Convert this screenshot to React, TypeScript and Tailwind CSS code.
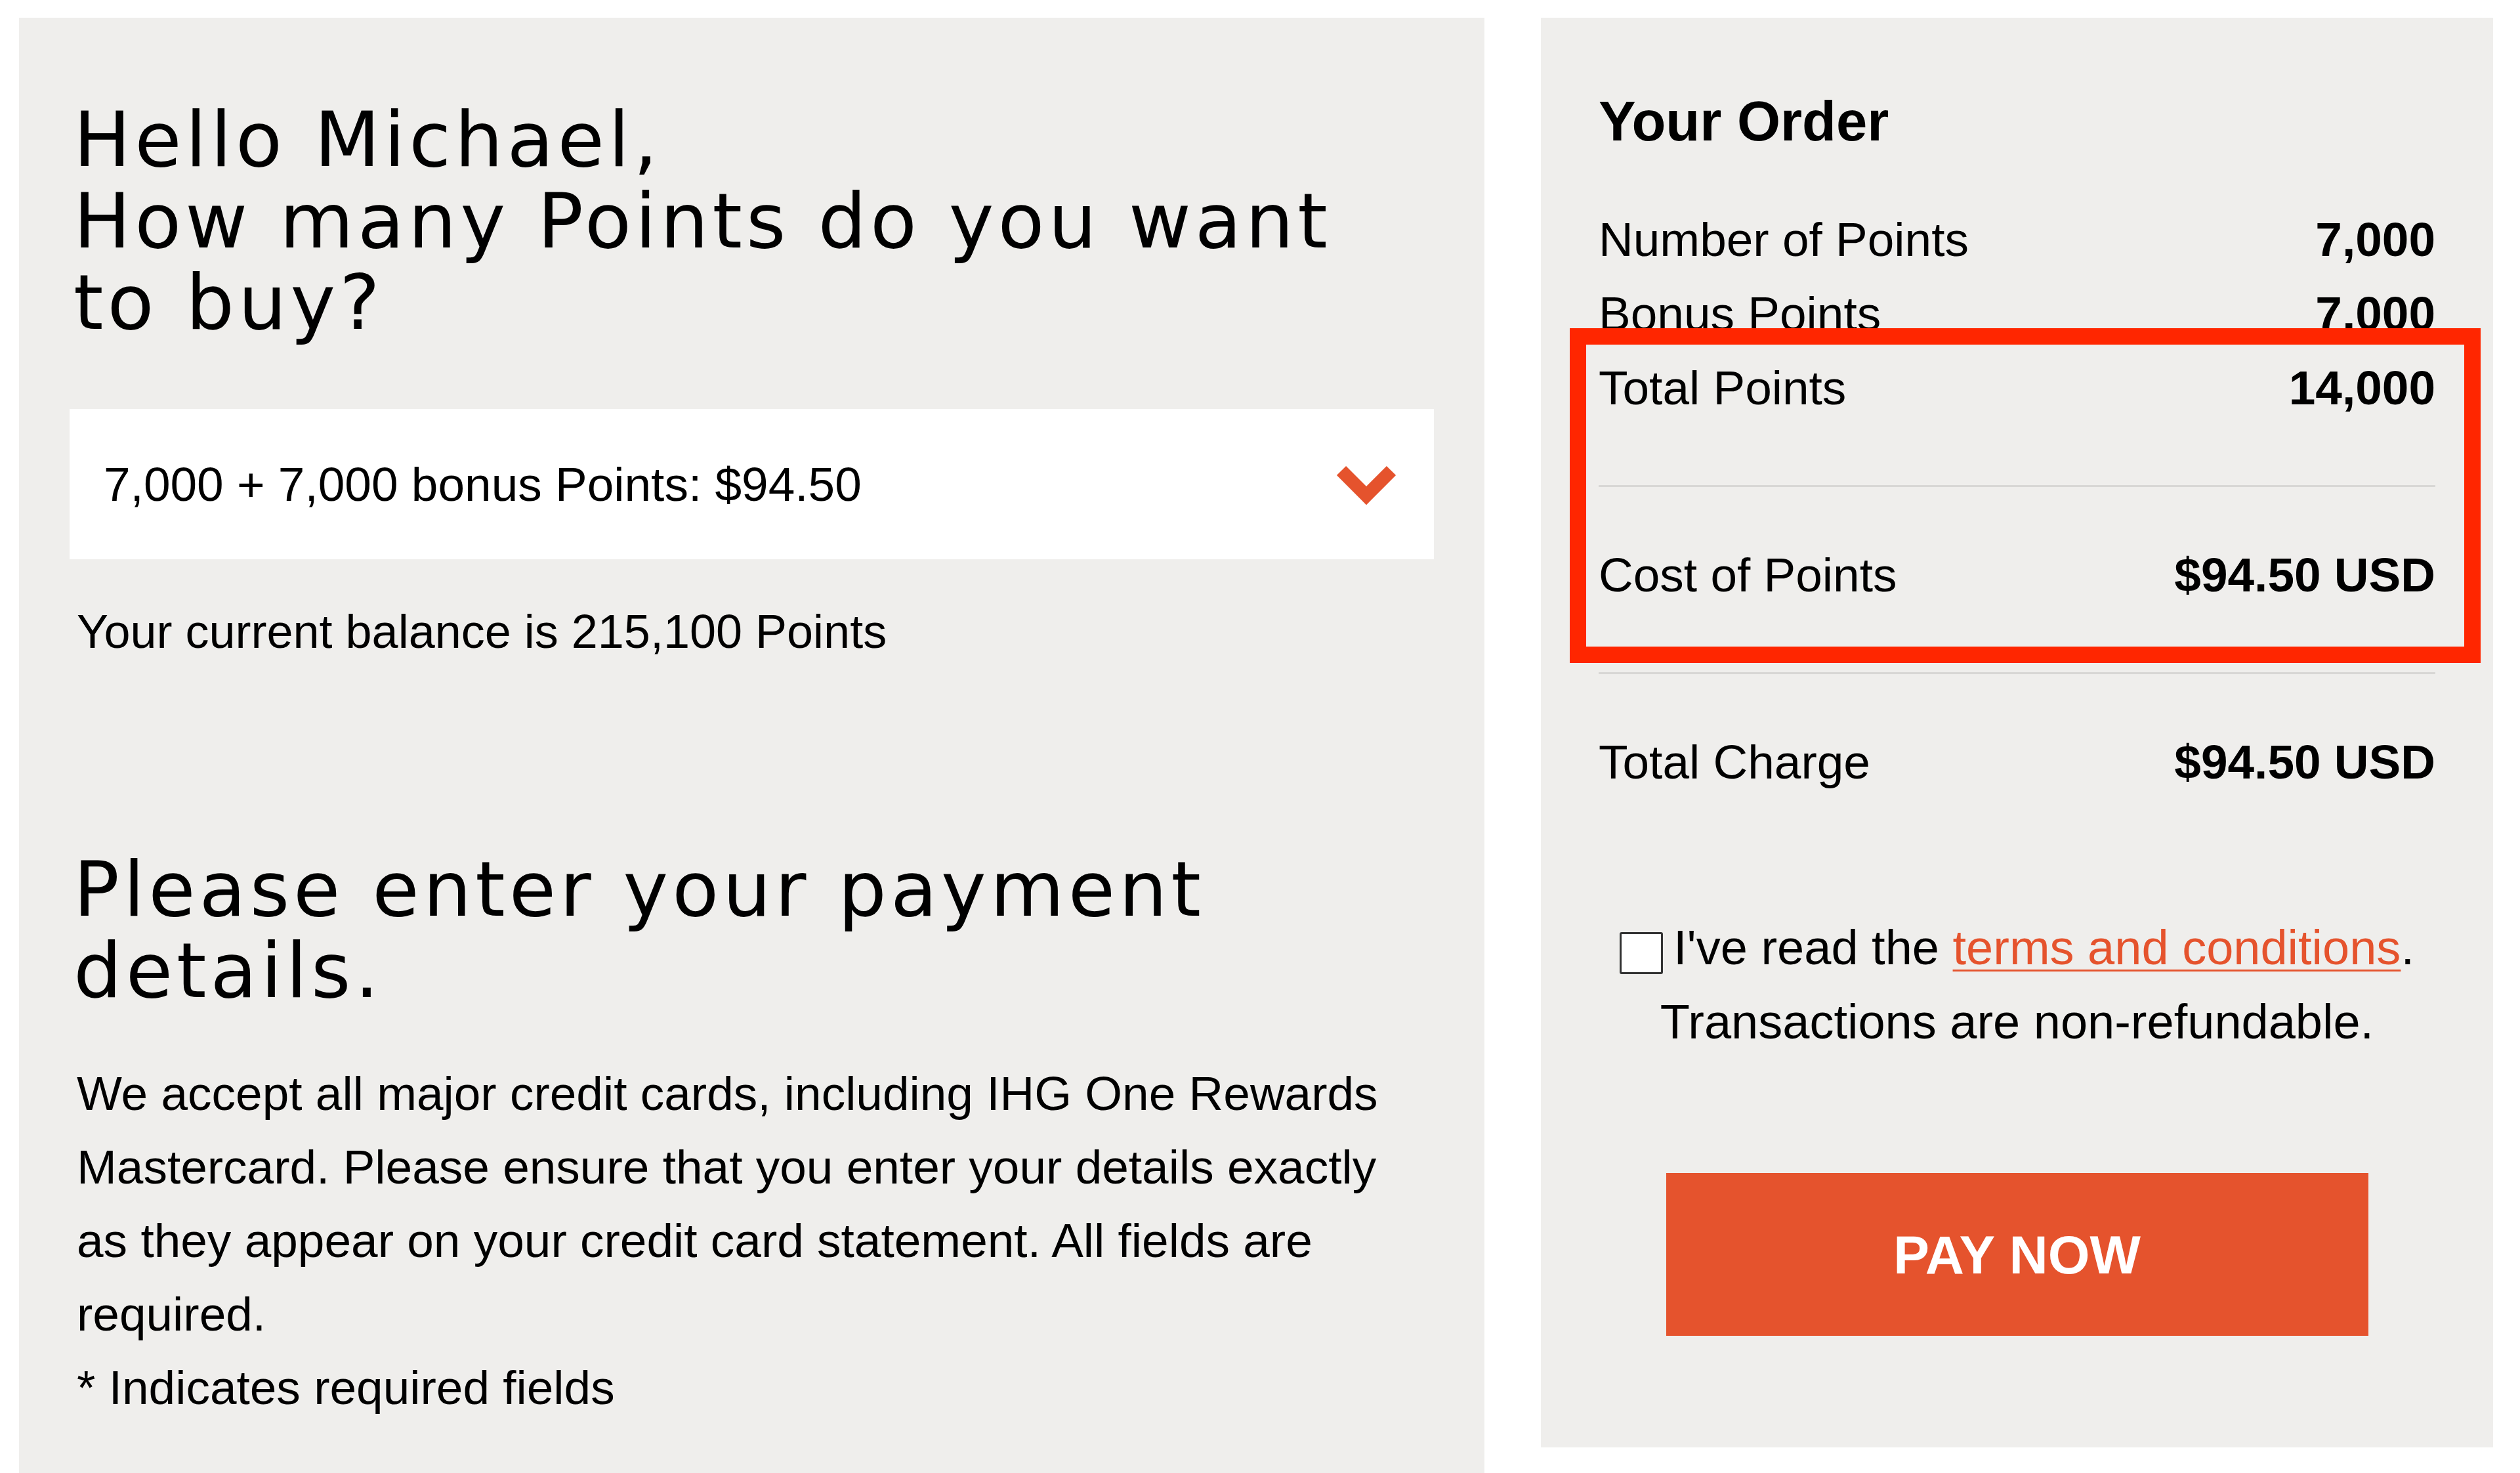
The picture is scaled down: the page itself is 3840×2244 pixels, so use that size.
import React from "react";

const rows = [
  { label: "Number of Points", value: "7,000" },
  { label: "Bonus Points", value: "7,000" },
  { label: "Total Points", value: "14,000" },
];

const Chevron = () => (
  <svg width="96" height="70" viewBox="0 0 96 70" fill="none" className="mt-[8px]">
    <polyline points="10,10 48,48 86,10" stroke="#e5532d" strokeWidth="20" />
  </svg>
);

const OrderRow = ({ label, value, className = "" }: { label: string; value: string; className?: string }) => (
  <div className={`flex justify-between text-[73px] leading-[113px] ${className}`}>
    <span>{label}</span>
    <span className="font-bold">{value}</span>
  </div>
);

export default function App() {
  return (
    <div className="min-h-screen bg-white pl-[29px] pt-[27px] flex items-start gap-[86px] text-black font-['Liberation_Sans',Arial,sans-serif]">
      {/* purchase form */}
      <section className="w-[2233px] h-[2217px] shrink-0 bg-[#efeeec] px-[77px] pt-[124px]">
        <h1 className="ml-[6px] max-w-[1990px] font-['DejaVu_Sans',sans-serif] text-[116px] leading-[124px] tracking-[6px] font-normal">
          Hello Michael,
          <br />
          How many Points do you want to buy?
        </h1>

        <div className="mt-[100px] h-[229px] bg-white flex items-center justify-between pl-[52px] pr-[55px]">
          <span className="text-[73px]">7,000 + 7,000 bonus Points: $94.50</span>
          <Chevron />
        </div>

        <p className="mt-[55px] ml-[11px] text-[72px] leading-[110px]">Your current balance is 215,100 Points</p>

        <h2 className="mt-[276px] ml-[6px] max-w-[1990px] font-['DejaVu_Sans',sans-serif] text-[116px] leading-[124px] tracking-[6px] font-normal">
          Please enter your payment details.
        </h2>

        <div className="mt-[69px] ml-[11px] max-w-[2069px] text-[73px] leading-[112px]">
          <p>
            We accept all major credit cards, including IHG One Rewards Mastercard. Please ensure that you enter your
            details exactly as they appear on your credit card statement. All fields are required.
          </p>
          <p>* Indicates required fields</p>
        </div>
      </section>

      {/* order summary */}
      <aside className="relative w-[1451px] h-[2178px] shrink-0 bg-[#efeeec] px-[88px] pt-[108px]">
        <h2 className="text-[85px] leading-[100px] font-bold">Your Order</h2>

        <div className="mt-[73px]">
          {rows.map((r) => (
            <OrderRow key={r.label} label={r.label} value={r.value} />
          ))}
        </div>

        <div className="mt-[92px] h-[3px] bg-[#d8d7d5]" />
        <OrderRow label="Cost of Points" value="$94.50 USD" className="mt-[77px]" />
        <div className="mt-[92px] h-[3px] bg-[#d8d7d5]" />
        <OrderRow label="Total Charge" value="$94.50 USD" className="mt-[77px]" />

        <p className="mt-[170px] text-center text-[74px] leading-[113px]">
          <span className="inline-block w-[66px] h-[64px] mr-[16px] align-[-15px] bg-white border-[3px] border-[#333] rounded-[3px]" />
          I've read the{" "}
          <a className="text-[#e5532d] underline underline-offset-[8px] decoration-[3px]">terms and conditions</a>.
          <br />
          Transactions are non-refundable.
        </p>

        <button
          type="button"
          className="mx-auto mt-[174px] w-[1070px] h-[248px] bg-[#e5532d] text-white font-bold text-[82px] flex items-center justify-center"
        >
          PAY NOW
        </button>

        <div className="absolute left-[44px] top-[473px] w-[1388px] h-[510px] border-[25px] border-[#ff2600] pointer-events-none" />
      </aside>
    </div>
  );
}
